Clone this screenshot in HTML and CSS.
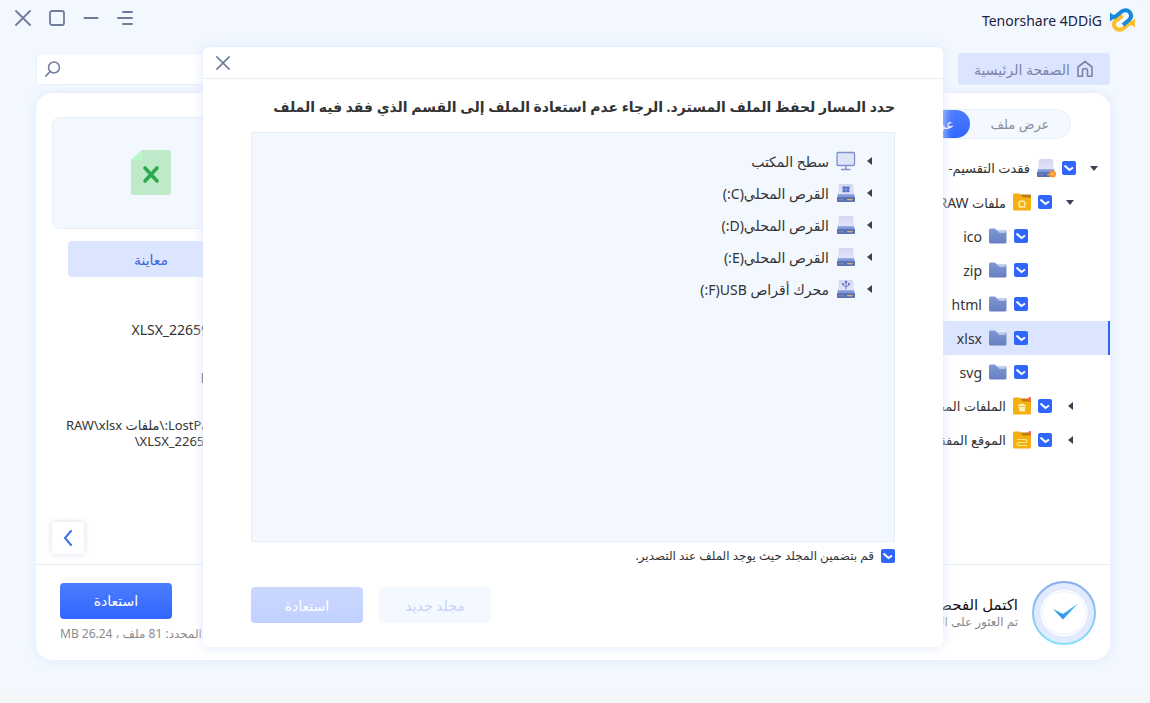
FILE: index.html
```html
<!DOCTYPE html>
<html lang="ar" dir="rtl">

<head>
    <meta charset="UTF-8">
    <meta name="viewport" content="width=device-width, initial-scale=1.0">
    <title>Tenorshare 4DDiG</title>
    <link rel="stylesheet" href="styles.css">
</head>

<body>

    <!-- Shared icons -->
    <svg class="sprite" aria-hidden="true">
        <defs>
            <linearGradient id="gBase" x1="0" y1="0" x2="0" y2="1">
                <stop offset="0" stop-color="#9db2e8" />
                <stop offset="1" stop-color="#6580c4" />
            </linearGradient>
            <linearGradient id="gTop" x1="0" y1="0" x2="0" y2="1">
                <stop offset="0" stop-color="#d3d6f0" />
                <stop offset="1" stop-color="#e3e6f8" />
            </linearGradient>
            <linearGradient id="gFolder" x1="0" y1="0" x2="0" y2="1">
                <stop offset="0" stop-color="#8098d4" />
                <stop offset="1" stop-color="#667fc0" />
            </linearGradient>
        </defs>
        <symbol id="close" viewBox="0 0 16 16">
            <path d="M1 1l14 14M15 1L1 15" fill="none" stroke="#707c9c" stroke-width="1.800" stroke-linecap="round" />
        </symbol>
        <symbol id="disk" viewBox="0 0 20 20">
            <path d="M4.500 1h11q1.500 0 1.700 1.500L18 12H2L2.800 2.500Q3 1 4.500 1z" fill="url(#gTop)" />
            <path d="M2 11h16l1 4H1z" fill="url(#gBase)" />
            <path d="M1 14.500h18V18q0 1-1 1H2q-1 0-1-1z" fill="#5a70ae" />
            <rect x="11" y="16" width="5.500" height="1.300" fill="#e2b56b" />
            <path d="M3.500 16.600h1m1.500 0h1" stroke="#9db2e8" />
        </symbol>
        <symbol id="folder" viewBox="0 0 18 16">
            <path d="M0 2q0-1.500 1.500-1.500h4.500l2 2h8.500q1 0 1 1V14q0 1.500-1.500 1.500h-14.500Q0 15.500 0 14z" fill="url(#gFolder)" />
            <path d="M8 1.500h8.500v3h-6.500z" fill="#f0f3ff" />
            <path d="M9 3h8" stroke="#8098d4" stroke-width=".8" />
        </symbol>
        <symbol id="folder-y" viewBox="0 0 18 18">
            <path d="M7 1.500h10q1 0 1 1V8H7z" fill="#c07a08" />
            <path d="M0 2Q0 .5 1.500.5h4.500q1 0 1.500 1l2 2.500q.5.500 1.500.500h6q1 0 1 1V16q0 1.500-1.500 1.500h-15Q0 17.500 0 16z" fill="#f3b010" />
        </symbol>
    </svg>

    <div class="window">
        <header class="titlebar">
            <div class="brand">
                <svg width="25" height="24" viewBox="0 0 25 24" fill="none" stroke-width="4">
                    <path d="M25 15.500L20 15L14 20Q9 23.500 5.500 20Q2 16 6 12L12 7" stroke="#fcbf2e" />
                    <path d="M0 8.500L5 9L11 4Q16 .5 19.500 4Q23 8 19 12L13 17" stroke="#1589dc" />
                    <path d="M6 12L12 7L14 9L8 14z" fill="#fcbf2e" />
                    <path d="M0 4.500l4 3v3l-4 3z" fill="#1589dc" />
                    <path d="M25 19.500l-4-3v-3l4-3z" fill="#fcbf2e" />
                </svg>
                <span>Tenorshare 4DDiG</span>
            </div>
            <div class="controls">
                <button aria-label="القائمة"><svg width="16" height="16" viewBox="0 0 16 16"><path d="M6 2h9M1 8h14M6 14h9" stroke="#707c9c" stroke-width="2" stroke-linecap="round" /></svg></button>
                <button aria-label="تصغير"><svg width="16" height="16" viewBox="0 0 16 16"><path d="M1.500 8h13" stroke="#707c9c" stroke-width="2" stroke-linecap="round" /></svg></button>
                <button aria-label="تكبير"><svg width="16" height="16" viewBox="0 0 16 16"><rect x="1" y="1" width="14" height="14" rx="2" fill="none" stroke="#707c9c" stroke-width="1.800" /></svg></button>
                <button aria-label="إغلاق"><svg width="16" height="16"><use href="#close" /></svg></button>
            </div>
        </header>

        <div class="toolbar">
            <button class="home">
                <svg width="18" height="18" viewBox="0 0 18 18"><path d="M6.500 16.200V11q0-2.500 2.500-2.500t2.500 2.500v5.200h4.500V7L9 1.500 2 7v9.200z" fill="none" stroke="#7a84a8" stroke-width="1.600" stroke-linejoin="round" /></svg>
                <span>الصفحة الرئيسية</span>
            </button>
            <div class="search">
                <input type="text" aria-label="بحث">
                <svg width="16" height="16" viewBox="0 0 16 16"><circle cx="9" cy="6.500" r="5.500" fill="none" stroke="#707c9c" stroke-width="1.500" /><path d="M5 10.500L1 15" stroke="#707c9c" stroke-width="1.700" stroke-linecap="round" /></svg>
            </div>
        </div>

        <main class="card">
            <div class="content">
                <aside class="sidebar">
                    <div class="segmented">
                        <button>عرض ملف</button>
                        <button class="active">عرض شجرة</button>
                    </div>
                    <ul class="tree">
                        <li>
                            <button class="arrow down" aria-label="طي"></button>
                            <label><input type="checkbox" checked>
                                <svg width="20" height="20" viewBox="0 0 20 20"><use href="#disk" width="20" height="20" /><circle cx="16.500" cy="16" r="3.500" fill="#f6982a" /><path d="M14.800 16h3.400" stroke="#ffd9a0" /></svg>
                                <span>فقدت التقسيم-</span></label>
                        </li>
                        <li class="level2">
                            <button class="arrow down" aria-label="طي"></button>
                            <label><input type="checkbox" checked>
                                <svg width="18" height="18" viewBox="0 0 18 18"><use href="#folder-y" width="18" height="18" /><circle cx="9" cy="11" r="3" fill="none" stroke="#ffeaa8" stroke-width="1.500" /><path d="M6 15l1-1.500M12 15l-1-1.500" stroke="#ffeaa8" /></svg>
                                <span>ملفات <b>RAW</b></span></label>
                        </li>
                        <li class="level3"><label><input type="checkbox" checked><svg width="18" height="16"><use href="#folder" /></svg><b>ico</b></label></li>
                        <li class="level3"><label><input type="checkbox" checked><svg width="18" height="16"><use href="#folder" /></svg><b>zip</b></label></li>
                        <li class="level3"><label><input type="checkbox" checked><svg width="18" height="16"><use href="#folder" /></svg><b>html</b></label></li>
                        <li class="level3 selected"><label><input type="checkbox" checked><svg width="18" height="16"><use href="#folder" /></svg><b>xlsx</b></label></li>
                        <li class="level3"><label><input type="checkbox" checked><svg width="18" height="16"><use href="#folder" /></svg><b>svg</b></label></li>
                        <li class="level2">
                            <button class="arrow" aria-label="توسيع"></button>
                            <label><input type="checkbox" checked>
                                <svg width="18" height="18" viewBox="0 0 18 18"><use href="#folder-y" width="18" height="18" /><circle cx="17" cy="2" r="2" fill="#f26a4b" /><path d="M5 8.500h8M7 7.500h4" stroke="#fff0b8" stroke-width="1.300" /><path d="M5.500 10h7l-.800 4.500H6.300z" fill="#fff0b8" /></svg>
                                <span>الملفات المحذوفة</span></label>
                        </li>
                        <li class="level2">
                            <button class="arrow" aria-label="توسيع"></button>
                            <label><input type="checkbox" checked>
                                <svg width="18" height="18" viewBox="0 0 18 18"><use href="#folder-y" width="18" height="18" /><circle cx="17" cy="2" r="2" fill="#f26a4b" /><path d="M4 8.500h8q2 0 2 1.500t-2 1.500H6q-2 0-2 1.500T6 14.500h8" fill="none" stroke="#ffe58f" stroke-width="1.200" /></svg>
                                <span>الموقع المفقود</span></label>
                        </li>
                    </ul>
                </aside>

                <section class="preview">
                    <div class="thumb">
                        <svg width="42" height="46" viewBox="0 0 42 46">
                            <path d="M12 0h26q3 0 3 3v39q0 3-3 3H4q-3 0-3-3V10z" fill="#bdeac8" />
                            <path d="M12 0v7q0 3-3 3H1z" fill="#b9f7cb" />
                            <path d="M15 18l12 13M27 18L15 31" stroke="#2baa4c" stroke-width="3.600" stroke-linecap="round" />
                        </svg>
                    </div>
                    <button class="preview-btn">معاينة</button>
                    <div class="details">
                        <p><b>XLSX_226590.xlsx</b></p>
                        <p><b>KB 105</b></p>
                        <p class="path"><b>LostPartition</b>:\ملفات <b>RAW\xlsx</b><br><b>XLSX_226590.xlsx</b>\</p>
                    </div>
                    <button class="collapse" aria-label="طي"><svg width="12" height="16" viewBox="0 0 12 16"><path d="M9 1L3 8l6 7" fill="none" stroke="#3b74ea" stroke-width="2" stroke-linecap="round" /></svg></button>
                </section>
            </div>

            <footer class="footer">
                <div class="status">
                    <svg width="64" height="64" viewBox="0 0 64 64">
                        <defs>
                            <linearGradient id="gRing" x1="0" y1="0" x2="0" y2="1">
                                <stop offset="0" stop-color="#8ba9f0" />
                                <stop offset="1" stop-color="#86e4f2" />
                            </linearGradient>
                            <linearGradient id="gCheck" x1="0" y1="1" x2="1" y2="0">
                                <stop offset="0" stop-color="#2f86f4" />
                                <stop offset="1" stop-color="#3cc4ee" />
                            </linearGradient>
                        </defs>
                        <circle cx="32" cy="32" r="31" fill="#e1eafe" stroke="url(#gRing)" stroke-width="2" />
                        <circle cx="32" cy="32" r="23.500" fill="#fff" />
                        <circle cx="32" cy="32" r="21.500" fill="none" stroke="#eef2fe" />
                        <path d="M21 28l10 5L46 22.500 31 38.500z" fill="url(#gCheck)" />
                    </svg>
                    <div>
                        <h2>اكتمل الفحص</h2>
                        <p>تم العثور على الملفات</p>
                    </div>
                </div>
                <div class="recover">
                    <button class="primary">استعادة</button>
                    <p>المحدد: <b>81</b> ملف ، <b>26.24 MB</b></p>
                </div>
            </footer>
        </main>

        <!-- Save location dialog -->
        <div class="overlay">
            <div class="dialog" role="dialog" aria-labelledby="dialogTitle">
                <div class="dialog-bar">
                    <button aria-label="إغلاق"><svg width="14" height="14"><use href="#close" /></svg></button>
                </div>
                <div class="dialog-body">
                    <h1 id="dialogTitle">حدد المسار لحفظ الملف المسترد. الرجاء عدم استعادة الملف إلى القسم الذي فقد فيه الملف</h1>
                    <ul class="drives">
                        <li>
                            <button class="arrow" aria-label="توسيع"></button>
                            <svg width="20" height="20" viewBox="0 0 20 20"><rect x="1" y="1.500" width="17.500" height="13" rx="1" fill="#e0e4fa" stroke="#7f92cc" stroke-width="1.300" /><path d="M9.800 15v3M5 18.500h9.500" stroke="#7f92cc" stroke-width="1.500" /></svg>
                            <span>سطح المكتب</span>
                        </li>
                        <li>
                            <button class="arrow" aria-label="توسيع"></button>
                            <svg width="20" height="20" viewBox="0 0 20 20"><use href="#disk" width="20" height="20" /><path d="M6.500 3.500h3.300v3h-3.300zM10.200 3.500h3.300v3h-3.300zM6.500 6.800h3.300v2.500h-3.300zM10.200 6.800h3.300v2.500h-3.300z" fill="#5570c8" /></svg>
                            <span>القرص المحلي(C:)</span>
                        </li>
                        <li>
                            <button class="arrow" aria-label="توسيع"></button>
                            <svg width="20" height="20"><use href="#disk" /></svg>
                            <span>القرص المحلي(D:)</span>
                        </li>
                        <li>
                            <button class="arrow" aria-label="توسيع"></button>
                            <svg width="20" height="20"><use href="#disk" /></svg>
                            <span>القرص المحلي(E:)</span>
                        </li>
                        <li>
                            <button class="arrow" aria-label="توسيع"></button>
                            <svg width="20" height="20" viewBox="0 0 20 20"><use href="#disk" width="20" height="20" /><path d="M10 2.500v8M7 4.500V6l3 2 3-2V4.500" fill="none" stroke="#6f84cc" /><circle cx="10" cy="3" r="1.200" fill="#5570c8" /><circle cx="7" cy="5" r="1" fill="#5570c8" /><circle cx="13" cy="5" r="1" fill="#5570c8" /></svg>
                            <span>محرك أقراص <bdi>USB</bdi>(F:)</span>
                        </li>
                    </ul>
                    <label class="include"><input type="checkbox" checked><span>قم بتضمين المجلد حيث يوجد الملف عند التصدير.</span></label>
                    <div class="actions">
                        <button class="secondary" disabled>مجلد جديد</button>
                        <button class="primary" disabled>استعادة</button>
                    </div>
                </div>
            </div>
        </div>
    </div>

</body>

</html>
```
FILE: styles.css
```css
* {
    box-sizing: border-box;
}

body {
    margin: 0;
    padding: 0 4px 9px 0;
    min-height: 100vh;
    display: flex;
    background: #f5f6f8;
    font-family: "Noto Sans", "DejaVu Sans", sans-serif;
    font-size: 13px;
    color: #333;
}

h1, h2, p, ul {
    margin: 0;
    padding: 0;
}

ul {
    list-style: none;
}

b {
    font-weight: normal;
    font-size: 14px;
}

button {
    border: none;
    padding: 0;
    background: none;
    font: inherit;
    color: inherit;
    cursor: pointer;
}

svg {
    display: block;
    flex: none;
}

.sprite {
    position: absolute;
    width: 0;
    height: 0;
}

.window {
    position: relative;
    flex: 1;
    display: flex;
    flex-direction: column;
    padding-bottom: 34px;
    background: #f3f8ff;
    border-radius: 0 8px 8px 8px;
}

/* Title bar */
.titlebar {
    display: flex;
    justify-content: space-between;
    align-items: center;
    height: 40px;
    padding: 0 11px 0 15px;
}

.brand {
    display: flex;
    align-items: center;
    gap: 8px;
    font-size: 14px;
    color: #1c2140;
}

.controls {
    display: flex;
    gap: 18px;
    padding-bottom: 4px;
}

/* Toolbar */
.toolbar {
    display: flex;
    justify-content: space-between;
    margin: 13px 36px 8px;
}

.home {
    display: flex;
    align-items: center;
    justify-content: center;
    gap: 6px;
    width: 152px;
    height: 32px;
    border-radius: 4px;
    background: #dce5ff;
    color: #7a84a8;
    font-size: 14px;
}

.search {
    display: flex;
    align-items: center;
    width: 230px;
    padding-left: 8px;
    background: #fff;
    border: 1px solid #e9f0fa;
    border-radius: 4px;
}

.search input {
    flex: 1;
    min-width: 0;
    border: none;
    outline: none;
    background: none;
}

/* Main card */
.card {
    flex: 1;
    display: flex;
    flex-direction: column;
    margin: 0 36px;
    background: #fff;
    border-radius: 16px;
    box-shadow: 0 0 12px #dde9fd;
}

.content {
    flex: 1;
    display: flex;
    justify-content: space-between;
}

.sidebar {
    width: 280px;
    padding-top: 16px;
}

.segmented {
    display: flex;
    width: 202px;
    height: 30px;
    margin-right: 39px;
    border: 1px solid #e8f0fa;
    border-radius: 15px;
    background: #f4f9ff;
    color: #8b8f9a;
}

.segmented button {
    flex: 1;
    border-radius: 14px;
}

.segmented .active {
    background: linear-gradient(#4c7dff, #3066fd);
    color: #fff;
}

.tree {
    margin-top: 12px;
}

.tree li {
    display: flex;
    align-items: center;
    gap: 13px;
    height: 34px;
    padding-right: 11px;
    white-space: nowrap;
}

.tree label {
    display: flex;
    align-items: center;
    gap: 6px;
}

.tree .level2 {
    padding-right: 35px;
}

.tree .level2 label,
.tree .level3 label {
    gap: 7px;
}

.tree .level3 {
    padding-right: 82px;
}

.tree .selected {
    background: #dce5ff;
    border-right: 2px solid #3066e8;
    padding-right: 80px;
}

.arrow {
    width: 10px;
    height: 10px;
    display: grid;
    place-items: center;
}

.arrow::before {
    content: "";
    border: 4px solid transparent;
    border-right: 5px solid #3c4256;
    border-left: 0;
}

.arrow.down::before {
    border: 4px solid transparent;
    border-top: 5px solid #3c4256;
    border-bottom: 0;
}

input[type="checkbox"] {
    appearance: none;
    flex: none;
    width: 14px;
    height: 14px;
    margin: 0;
    border: 1px solid #3066fd;
    border-radius: 2px;
}

input[type="checkbox"]:checked {
    border: none;
    background: #3066fd url('data:image/svg+xml,<svg xmlns="http://www.w3.org/2000/svg" viewBox="0 0 14 14"><path d="M2.500 4.500l5 4.500L11 6.500" fill="none" stroke="white" stroke-width="2"/></svg>');
}

/* Preview pane */
.preview {
    display: flex;
    flex-direction: column;
    width: 230px;
    padding: 24px 16px 10px;
}

.thumb {
    display: grid;
    place-items: center;
    height: 112px;
    border: 1px solid #e6effa;
    border-radius: 8px;
    background: #f3f8ff;
}

.preview-btn {
    height: 36px;
    margin: 12px 16px 0;
    border-radius: 4px;
    background: #dce5ff;
    color: #3b66e0;
    font-size: 14px;
}

.details {
    margin-top: 44px;
    padding-right: 4px;
    line-height: 18px;
    white-space: nowrap;
}

.details p {
    margin-bottom: 30px;
}

.details .path,
.details .path b {
    font-size: 13px;
    line-height: 16px;
}

.collapse {
    display: grid;
    place-items: center;
    width: 32px;
    height: 32px;
    margin-top: auto;
    margin-right: auto;
    border-radius: 3px;
    background: #fff;
    box-shadow: 0 0 6px #d8dcea;
}

/* Footer */
.footer {
    display: flex;
    justify-content: space-between;
    align-items: center;
    height: 96px;
    padding: 0 14px 0 24px;
    border-top: 1px solid #e6edf6;
}

.status {
    display: flex;
    align-items: center;
    gap: 14px;
}

.status h2 {
    font-size: 15px;
    line-height: 18px;
    font-weight: normal;
    color: #111;
}

.status p,
.recover p {
    font-size: 12px;
    line-height: 18px;
    color: #8b8b8b;
}

.recover {
    display: flex;
    flex-direction: column;
    align-items: flex-end;
    gap: 6px;
}

.recover b {
    font-size: 12px;
}

.primary,
.secondary {
    width: 112px;
    height: 36px;
    border-radius: 4px;
    font-size: 14px;
}

.primary {
    background: linear-gradient(#4c7dff, #3066fd);
    color: #fff;
}

.primary:disabled {
    background: linear-gradient(#ccd8ff, #c0d0ff);
}

.secondary {
    background: #f4f8ff;
    color: #c6d2f8;
}

/* Dialog */
.overlay {
    position: absolute;
    inset: 0;
    display: grid;
    place-items: center;
}

.dialog {
    display: flex;
    flex-direction: column;
    width: 740px;
    max-width: 100%;
    min-height: 600px;
    background: #fff;
    border-radius: 6px;
    box-shadow: 0 0 12px #dfe6fb;
}

.dialog-bar {
    display: flex;
    justify-content: flex-end;
    align-items: center;
    height: 32px;
    padding: 0 13px;
    border-bottom: 1px solid #e9eef5;
}

.dialog-body {
    flex: 1;
    display: flex;
    flex-direction: column;
    padding: 16px 48px 24px;
}

.dialog h1 {
    font-size: 14px;
    line-height: 24px;
    white-space: nowrap;
}

.drives {
    flex: 1;
    margin: 13px 0 6px;
    padding: 12px 20px;
    border: 1px solid #e4edf8;
    background: #f3f8ff;
    font-size: 14px;
}

.drives li {
    display: flex;
    align-items: center;
    gap: 7px;
    height: 32px;
}

.drives .arrow {
    margin-left: 1px;
}

.include {
    display: flex;
    align-items: center;
    gap: 7px;
    font-size: 12px;
    line-height: 16px;
}

.actions {
    display: flex;
    justify-content: flex-end;
    gap: 16px;
    margin-top: 23px;
}
```
